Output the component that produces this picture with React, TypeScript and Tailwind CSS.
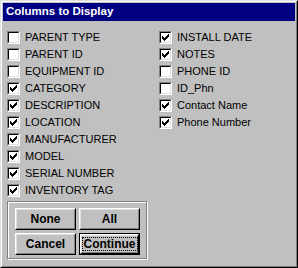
import React from "react";

const CheckMark = () => {
  const px: [number, number][] = [
    [6, 0],
    [5, 1], [6, 1],
    [0, 2], [4, 2], [5, 2], [6, 2],
    [0, 3], [1, 3], [3, 3], [4, 3], [5, 3],
    [0, 4], [1, 4], [2, 4], [3, 4], [4, 4],
    [1, 5], [2, 5], [3, 5],
    [2, 6],
  ];
  return (
    <svg width="7" height="7" viewBox="0 0 7 7" shapeRendering="crispEdges">
      {px.map(([x, y], i) => (
        <rect key={i} x={x} y={y} width="1" height="1" fill="#000" />
      ))}
    </svg>
  );
};

const Box = ({ checked }: { checked: boolean }) => (
  <span className="flex w-[13px] h-[13px] shrink-0 border border-t-[#808080] border-l-[#808080] border-b-white border-r-white">
    <span className="flex items-center justify-center w-[11px] h-[11px] bg-white border border-t-black border-l-black border-b-[#dfdfdf] border-r-[#dfdfdf]">
      {checked && <CheckMark />}
    </span>
  </span>
);

const Row = ({ label, checked }: { label: string; checked: boolean }) => (
  <div className="flex items-center h-[17px] gap-[5px]">
    <Box checked={checked} />
    <span className="text-[11px] leading-none text-black whitespace-nowrap">{label}</span>
  </div>
);

const Btn = ({ label, def }: { label: string; def?: boolean }) => {
  const inner = (
    <div className="flex w-full h-full border border-t-white border-l-white border-b-black border-r-black">
      <div className="flex items-center justify-center w-full h-full border border-t-[#dfdfdf] border-l-[#dfdfdf] border-b-[#808080] border-r-[#808080]">
        {def ? (
          <span className="px-[1px] border border-dotted border-black leading-[12px] font-bold text-[12px]">{label}</span>
        ) : (
          <span className="font-bold text-[12px] leading-none">{label}</span>
        )}
      </div>
    </div>
  );
  return def ? (
    <div className="w-[61px] h-[22px] border border-black flex">{inner}</div>
  ) : (
    <div className="w-[61px] h-[22px] flex">{inner}</div>
  );
};

const left: [string, boolean][] = [
  ["PARENT TYPE", false],
  ["PARENT ID", false],
  ["EQUIPMENT ID", false],
  ["CATEGORY", true],
  ["DESCRIPTION", true],
  ["LOCATION", true],
  ["MANUFACTURER", true],
  ["MODEL", true],
  ["SERIAL NUMBER", true],
  ["INVENTORY TAG", true],
];
const right: [string, boolean][] = [
  ["INSTALL DATE", true],
  ["NOTES", true],
  ["PHONE ID", false],
  ["ID_Phn", false],
  ["Contact Name", true],
  ["Phone Number", true],
];

export default function App() {
  return (
    <div
      className="w-[298px] h-[268px] bg-[#c0c0c0] border border-t-[#dfdfdf] border-l-[#dfdfdf] border-b-black border-r-black text-black"
      style={{ fontFamily: '"Liberation Sans", Arial, sans-serif' }}
    >
      <div className="w-full h-full border border-t-white border-l-white border-b-[#808080] border-r-[#808080] p-[1px] flex flex-col">
        <div className="h-[18px] bg-[#000080] flex items-center pl-[3px]">
          <span className="text-white font-bold text-[11.5px] leading-none">Columns to Display</span>
        </div>
        <div className="flex pl-[4px] pt-[8px]">
          <div className="w-[152px] flex flex-col">
            {left.map(([l, c]) => (
              <Row key={l} label={l} checked={c} />
            ))}
            <div className="mt-[2px] w-[140px] h-[58px] border border-[#808080] shadow-[inset_1px_1px_0_#fff,1px_1px_0_#fff] pl-[7px] pt-[6px] flex flex-col gap-[3px]">
              <div className="flex gap-[3px]">
                <Btn label="None" />
                <Btn label="All" />
              </div>
              <div className="flex gap-[3px]">
                <Btn label="Cancel" />
                <Btn label="Continue" def />
              </div>
            </div>
          </div>
          <div className="flex flex-col">
            {right.map(([l, c]) => (
              <Row key={l} label={l} checked={c} />
            ))}
          </div>
        </div>
      </div>
    </div>
  );
}
